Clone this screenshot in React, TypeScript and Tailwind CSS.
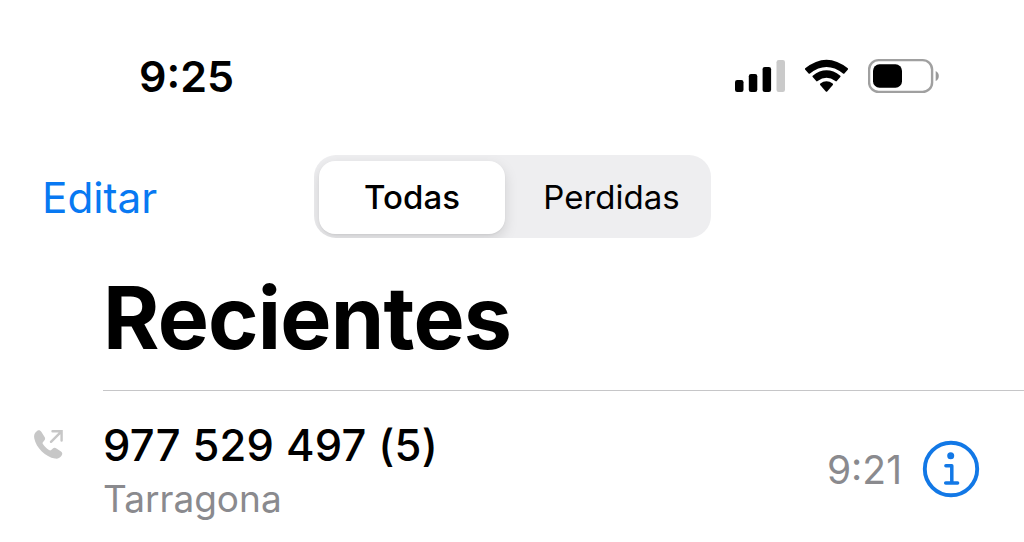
function SignalIcon() {
  return (
    <svg width="52" height="36" viewBox="734 58 52 36">
      <rect x="735" y="80" width="8.5" height="12" rx="2.2" />
      <rect x="748.8" y="74" width="8.500" height="18" rx="2.2" />
      <rect x="762.6" y="67" width="8.500" height="25" rx="2.2" />
      <rect x="776.5" y="60" width="8.500" height="32" rx="2.2" fill="#cacaca" />
    </svg>
  );
}

function WifiIcon() {
  return (
    <svg width="44" height="36" viewBox="804 58 44 36">
      <path d="M805.2 68.300Q826.500 51 847.800 68.300Q848.300 69 847.700 69.700L844.400 73.400Q843.700 74 843 73.400Q826.500 60.500 810 73.400Q809.300 74 808.600 73.400L805.300 69.700Q804.700 69 805.2 68.300Z" />
      <path d="M812.700 75.700Q826.500 65 840.300 75.700Q840.900 76.400 840.300 77L836.800 81.100Q836.100 81.700 835.400 81.100Q826.500 74.300 817.600 81.100Q816.900 81.700 816.200 81.100L812.700 77Q812.100 76.400 812.700 75.700Z" />
      <path d="M820.300 83.500Q826.500 79 832.700 83.500Q833.400 84.200 832.800 84.900L827.200 91.400Q826.500 92.100 825.800 91.400L820.200 84.900Q819.600 84.200 820.300 83.500Z" />
    </svg>
  );
}

function BatteryIcon() {
  return (
    <svg width="72" height="36" viewBox="868 58 72 36">
      <rect x="869.1" y="60.1" width="63" height="31.800" rx="9.500" fill="none" stroke="#a0a0a0" strokeWidth="2.400" />
      <rect x="873" y="64.300" width="29" height="23.400" rx="6.500" />
      <path d="M935.700 71V81Q938.800 79.500 938.800 76Q938.800 72.500 935.700 71Z" fill="#999" />
    </svg>
  );
}

function OutgoingCallIcon() {
  return (
    <svg width="32" height="32" viewBox="33 429 32 32" fill="none">
      <path d="M37.600 430.600C34.400 432.800 33.600 435.300 34.300 438.500C36.300 448 45.500 457 55 458.600C58 459 60.200 457.900 61.800 455.300C62.700 453.700 62.300 452.600 61 451.600L56.500 448.500C55 447.500 53.800 447.700 52.600 448.800L51.200 450.100C50.500 450.700 49.800 450.600 49 450.100C46.500 448.500 44.500 446.400 42.900 444C42.400 443.200 42.500 442.600 43.100 441.900L44.300 440.600C45.300 439.500 45.400 438.300 44.600 437.100L41.300 431.800C40.400 430.300 39.100 429.700 37.600 430.600Z" fill="#c7c7c7" />
      <path d="M51 441.800L61 431.800M52.500 431.200H61.600V440.500" stroke="#c7c7c7" strokeWidth="2.400" strokeLinecap="round" />
    </svg>
  );
}

function InfoIcon() {
  return (
    <svg width="58" height="58" viewBox="922.5 439.500 58 58" fill="none" stroke="#1278e6">
      <circle cx="951.500" cy="468.500" r="26.200" strokeWidth="3.900" />
      <circle cx="951.200" cy="455.300" r="3.500" fill="#1278e6" stroke="none" />
      <path d="M946.400 465.200H952.300V482.600M946.200 482.600H958.100" strokeWidth="3.500" strokeLinecap="round" strokeLinejoin="round" />
    </svg>
  );
}

export default function App() {
  return (
    <div className="h-[542px] w-[1024px] overflow-hidden bg-white font-['Inter','Liberation_Sans',sans-serif] text-black">
      <header className="flex h-[155px] items-start justify-between pr-[84px] pl-[139px] pt-[55px]">
        <span className="text-[43px] leading-[43px] font-semibold">9:25</span>
        <div className="flex items-center pt-[3px]">
          <SignalIcon />
          <span className="w-[18px]" />
          <WifiIcon />
          <span className="w-5" />
          <BatteryIcon />
        </div>
      </header>
      <nav className="flex h-[83px] items-center">
        <button className="w-[314px] pt-[2px] pl-[42px] text-left text-[42.3px] leading-[50px] text-[#0879f2]">Editar</button>
        <div className="flex h-[83px] w-[397px] overflow-hidden rounded-[22px] bg-[#eeeef0] p-[5px] pt-[6px]">
          <button className="h-[73px] w-[186px] rounded-[16px] bg-white text-[33px] font-medium shadow-[0_5px_14px_rgba(0,0,0,0.13),0_1px_2px_rgba(0,0,0,0.05)]">Todas</button>
          <button className="h-[73px] flex-1 pl-[12px] text-[33px]">Perdidas</button>
        </div>
      </nav>
      <h1 className="flex h-[152px] items-center pt-[8px] pl-[103px] text-[86px] font-bold tracking-[-0.8px]">Recientes</h1>
      <main className="flex">
        <div className="w-[103px] pt-[39px] pl-[33px]">
          <OutgoingCallIcon />
        </div>
        <div className="flex h-[152px] flex-1 items-start border-t border-[#c6c6c8]">
          <div className="flex-1 pt-[28px]">
            <div className="text-[43.5px] leading-[52px] font-medium tracking-[0.2px]">977 529 497 (5)</div>
            <div className="text-[37px] leading-[55px] text-[#8a8a8e]">Tarragona</div>
          </div>
          <div className="flex items-start gap-5 pt-[49px] pr-[44px]">
            <span className="pt-px text-[39px] leading-[58px] text-[#8a8a8e]">9:21</span>
            <InfoIcon />
          </div>
        </div>
      </main>
    </div>
  );
}
